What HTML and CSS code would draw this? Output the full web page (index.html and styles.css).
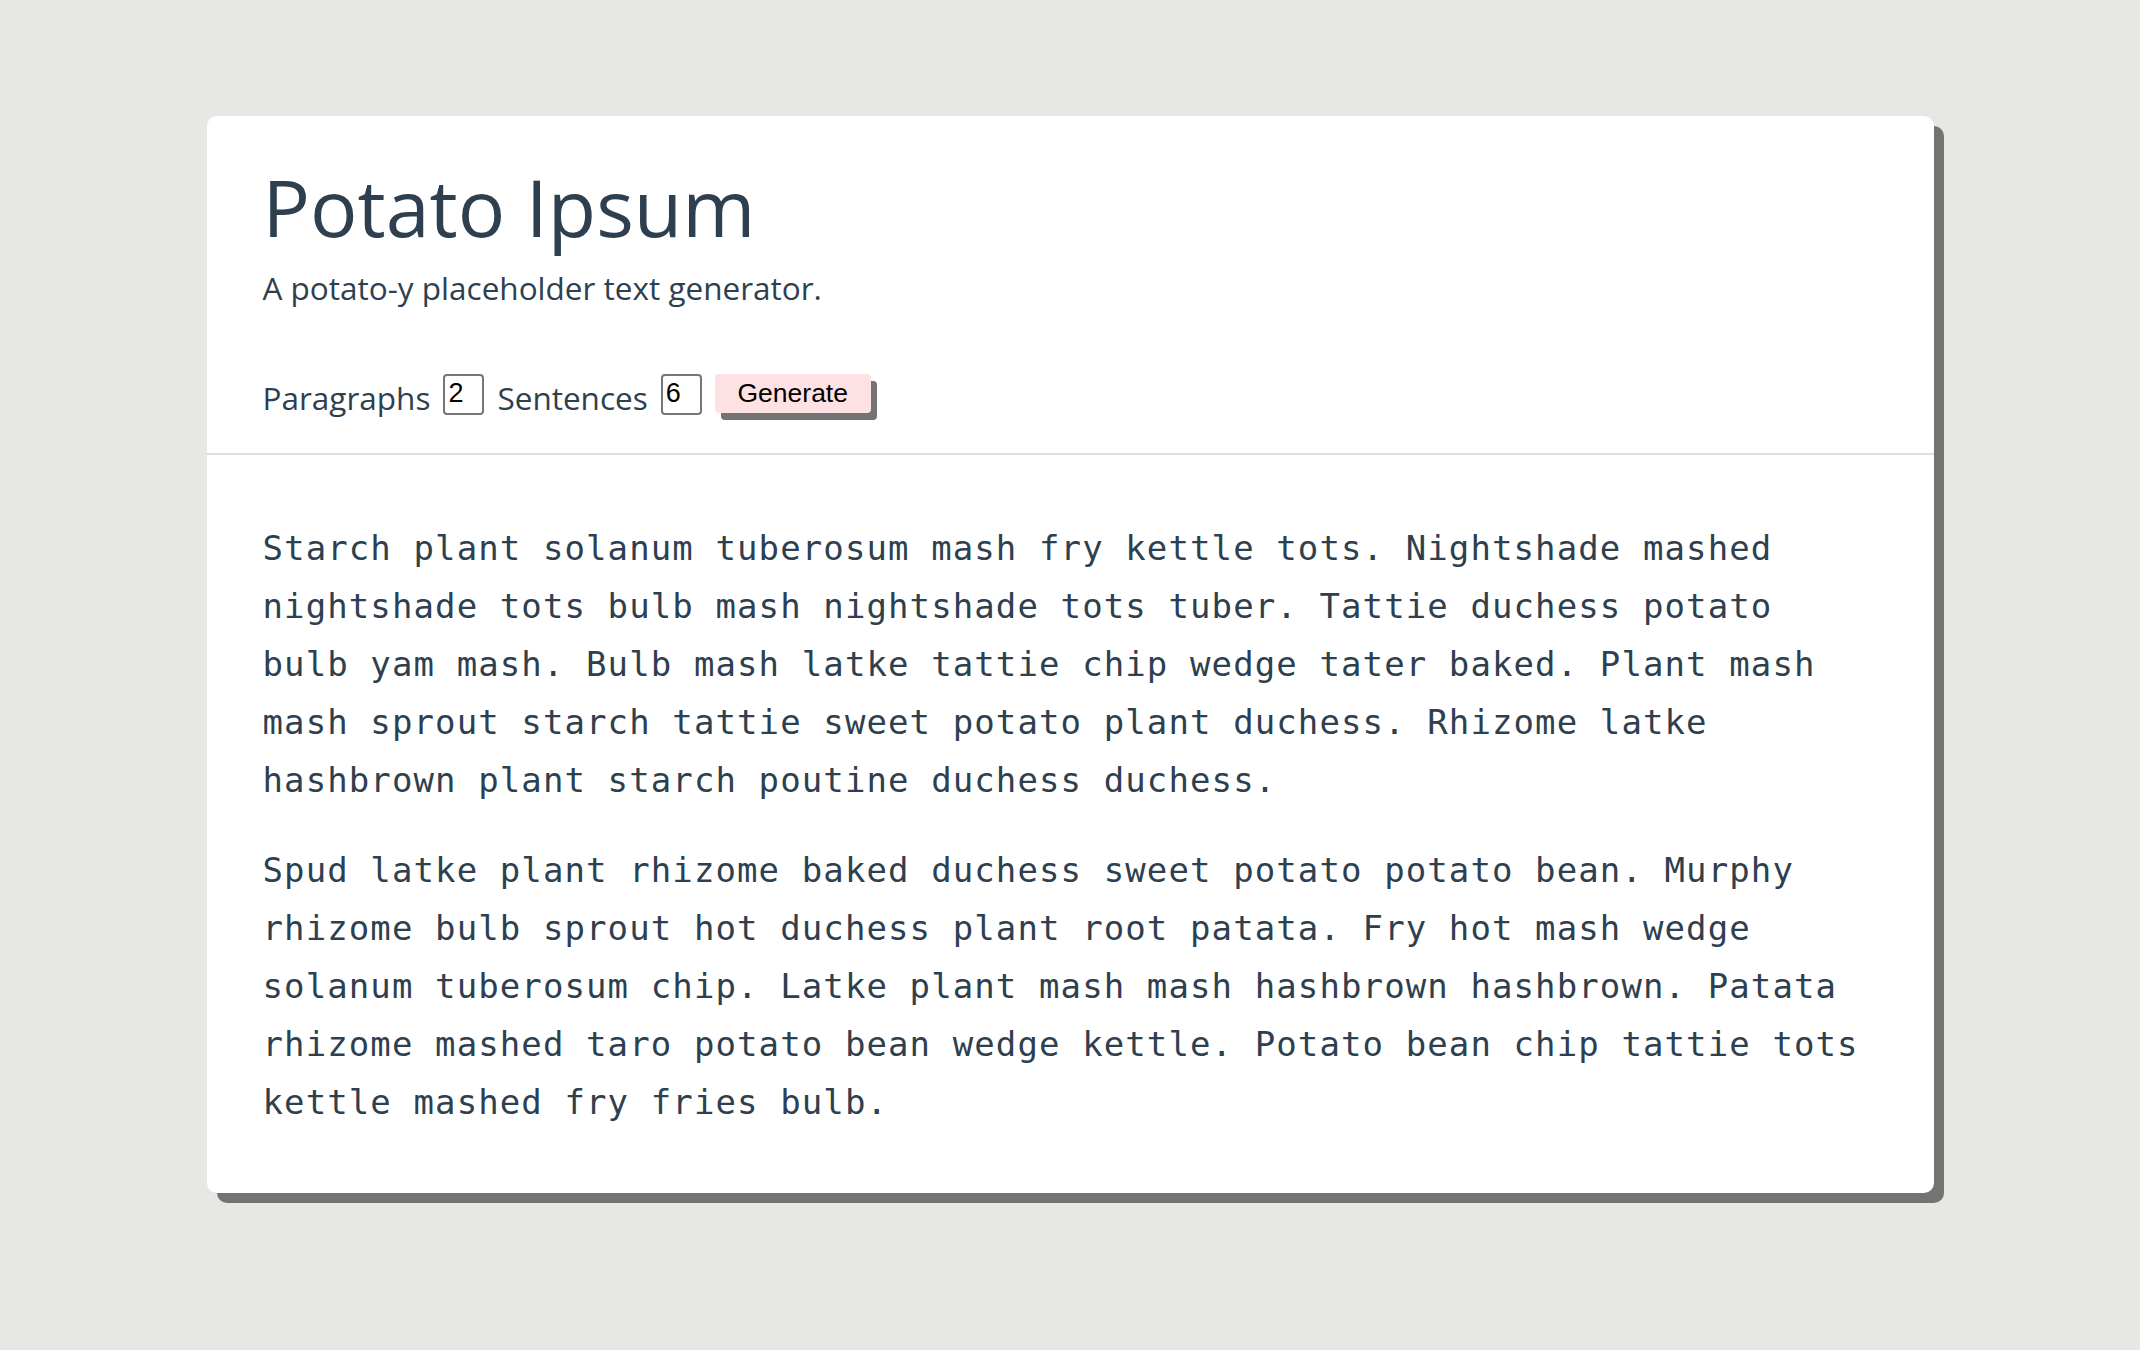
FILE: index.html
```html
<!DOCTYPE html>
<html lang="en">
<head>
<meta charset="utf-8">
<title>Potato Ipsum</title>
<link rel="stylesheet" href="styles.css">
</head>
<body>
<main class="card">
  <header class="head">
    <h1 class="title">Potato Ipsum</h1>
    <p class="subtitle">A potato-y placeholder text generator.</p>
    <div class="controls">
      <label class="label label-first" for="paras">Paragraphs</label>
      <input class="num" id="paras" type="text" value="2">
      <label class="label" for="sents">Sentences</label>
      <input class="num" id="sents" type="text" value="6">
      <button class="gen" type="button">Generate</button>
    </div>
  </header>
  <section class="body">
    <p class="para">Starch plant solanum tuberosum mash fry kettle tots. Nightshade mashed nightshade tots bulb mash nightshade tots tuber. Tattie duchess potato bulb yam mash. Bulb mash latke tattie chip wedge tater baked. Plant mash mash sprout starch tattie sweet potato plant duchess. Rhizome latke hashbrown plant starch poutine duchess duchess.</p>
    <p class="para">Spud latke plant rhizome baked duchess sweet potato potato bean. Murphy rhizome bulb sprout hot duchess plant root patata. Fry hot mash wedge solanum tuberosum chip. Latke plant mash mash hashbrown hashbrown. Patata rhizome mashed taro potato bean wedge kettle. Potato bean chip tattie tots kettle mashed fry fries bulb.</p>
  </section>
</main>
</body>
</html>
```

FILE: styles.css
```css
html, body {
  margin: 0;
  padding: 0;
}
body {
  background: #e7e8e4;
  color: #2e3f4f;
  font-family: "Open Sans", "Noto Sans", sans-serif;
  padding: 116px 0 100px;
}
.card {
  display: block;
  width: 1727px;
  margin: 0 auto;
  background: #ffffff;
  border-radius: 10px;
  box-shadow: 10px 10px 0 #737373;
}
.head {
  padding: 51px 56px 38px;
  border-bottom: 2px solid #dedede;
}
.title {
  margin: 0;
  font-size: 79px;
  line-height: 79px;
  font-weight: 400;
  color: #2e3f4f;
}
.subtitle {
  margin: 24px 0 0;
  font-size: 31.5px;
  line-height: 36px;
  font-weight: 400;
}
.controls {
  display: flex;
  align-items: flex-start;
  margin-top: 68px;
  height: 41px;
}
.label {
  font-size: 31.5px;
  line-height: 41px;
  padding-top: 3px;
  margin-left: 13px;
  margin-right: 13px;
}
.label-first {
  margin-left: 0;
}
.num {
  box-sizing: border-box;
  width: 41px;
  height: 41px;
  margin: 0;
  padding: 0 0 2px 3px;
  border: 2px solid #767676;
  border-radius: 4px;
  font-family: "Liberation Sans", Arial, sans-serif;
  font-size: 27px;
  color: #000;
  background: #fff;
}
.gen {
  box-sizing: border-box;
  height: 39px;
  width: 156px;
  margin-left: 13px;
  padding: 0;
  border: none;
  border-radius: 4px;
  background: #fde1e3;
  box-shadow: 6px 7px 0 #737373;
  font-family: "Liberation Sans", Arial, sans-serif;
  font-size: 26.5px;
  color: #000;
}
.body {
  padding: 64px 56px 62px;
}
.para {
  margin: 0 0 32px;
  font-family: "DejaVu Sans Mono", "Liberation Mono", monospace;
  font-size: 34px;
  letter-spacing: 1.1px;
  line-height: 58px;
}
.para:last-child {
  margin-bottom: 0;
}
```
